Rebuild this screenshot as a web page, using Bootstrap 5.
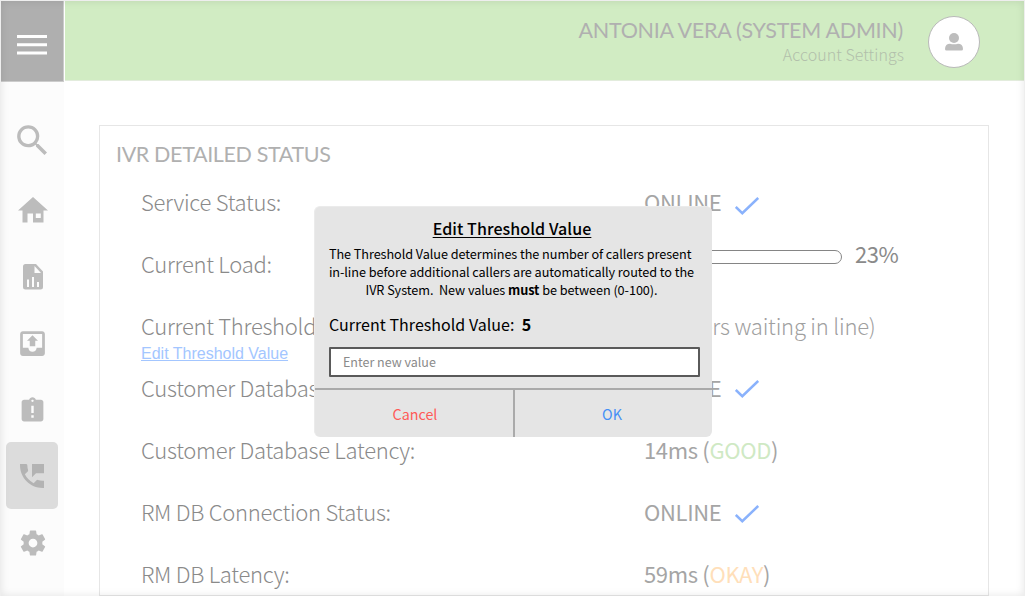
<!DOCTYPE html>
<html lang="en">
<head>
<meta charset="utf-8">
<title>IVR Detailed Status</title>
<meta name="viewport" content="width=device-width, initial-scale=1">
<link href="https://cdn.jsdelivr.net/npm/bootstrap@5.3.0/dist/css/bootstrap.min.css" rel="stylesheet">
<style>
  body { height: 596px; overflow: hidden; background: #fff; font-family: "Noto Sans CJK SC", "Open Sans", sans-serif; color: #8a8a8a; }
  .app { height: 596px; }
  .edge-shade { inset: 0; pointer-events: none; border: 1px solid #eee; border-bottom: 0; box-shadow: inset 0 0 9px rgba(0,0,0,.1); }
  .side { width: 64px; background: #fcfcfc; }
  .menu-btn { width: 64px; height: 82px; background: #afafaf; border-bottom: 1px solid #ccc; border-right: 1px solid #ccc; padding: 8px 0 0 0; }
  .side-item { width: 52px; height: 67px; border-radius: 5px; color: #bcbcbc; margin-left: 6.5px; }
  .side-item.current { background: #dcdcdc; color: #b3b3b3; margin-left: 6.400px; }
  .side-list { padding-top: 25px; }
  .topbar { height: 81px; background: #d1ecc3; border-bottom: 1px solid #e3ecdd; padding: 3px 45px 0 0; margin-left: 1px; }
  .who { font: 400 21.5px/26px Lato, sans-serif; letter-spacing: -.26px; color: #b0b0b0; margin-right: 1px; }
  .acct { font-weight: 300; font-size: 16px; line-height: 22px; letter-spacing: .05px; color: #b2bfab; margin-bottom: 2px; }
  .avatar { width: 52px; height: 52px; border: 1px solid #b9b9b9; margin-left: 24px; color: #bdbdbd; }
  .panel { width: 890px; height: 471px; margin: 44px 0 0 35px; border: 1px solid #e6e6e6; overflow: hidden; }
  .panel-title { font: 400 21.5px/28px Lato, sans-serif; letter-spacing: -.36px; color: #b0b0b0; margin: 14px 0 2px 16px; }
  .stat { height: 62px; padding-left: 41px; font-size: 22px; line-height: 30px; letter-spacing: -.28px; white-space: pre; }
  .stat-label { width: 503px; font-weight: 300; }
  .thin { font-weight: 300; color: #a0a0a0; letter-spacing: -.2px; }
  .val { color: #a5a5a5; letter-spacing: -.34px; }
  .tick { margin: 7px 0 0 14px; transform: translateY(1px); }
  .tick.mid { margin-top: 2px; }
  .load { width: 198px; height: 14px; border: 1px solid #858585; border-radius: 7px; background: #fff; margin-top: 8px; }
  .load .progress-bar { background: #8bb2fb; }
  .load-pct { margin-left: 13px; letter-spacing: -.4px; }
  .edit-link { font: 16px/18px "Liberation Sans", sans-serif; letter-spacing: 0; color: #a3c6ff; margin-top: 5px; }
  .good { color: #cfe9c4; } .okay { color: #ffdfba; }
  .dialog { left: 314px; top: 206px; width: 398px; height: 231px; background: #e5e5e5; border: 1px solid #ebebeb; border-width: 1px 0 0 1px; border-radius: 6px; color: #000; }
  .dialog h1 { font-size: 16px; line-height: 24px; font-weight: 500; letter-spacing: .08px; margin: 9px 3px 5px 0; text-underline-offset: 2px; }
  .dialog p { font-size: 12.700px; line-height: 18px; letter-spacing: -.07px; white-space: pre; margin: 0 4px 0 0; }
  .dialog .now { font-size: 16px; line-height: 24px; letter-spacing: .03px; margin: 13px 0 10px 14px; white-space: pre; }
  .dialog input { width: 371px; height: 30px; margin-left: 14px; padding: 0 12px 1px; border: 2px solid #5a5a5a; border-radius: 1px; font-size: 12.500px; background: #fff; margin-top: 1px; }
  .dialog input::placeholder { color: #8a8a8a; opacity: 1; }
  .actions { border-top: 2px solid #aaa; margin-top: 11px; }
  .actions button { font-size: 14.300px; background: none; border: 0; padding: 0; }
  .actions .cancel { width: 200px; border-right: 2px solid #aaa; padding-left: 2px; color: #ff5a57; }
  .actions .ok { padding-right: 3px; color: #4590f5; }
</style>
</head>
<body>
<div class="app d-flex position-relative">
  <nav class="side flex-shrink-0">
    <div class="menu-btn d-flex align-items-center justify-content-center">
      <svg width="30" height="22" fill="#fff"><path d="M0 1h30v3H0zM0 9.300h30v3H0zM0 17.600h30v3H0z"/></svg>
    </div>
    <div class="side-list d-flex flex-column">
      <a class="side-item d-flex align-items-center justify-content-center"><svg width="41" height="41" viewBox="0 0 24 24" fill="currentColor"><path d="M15.500 14h-.79l-.28-.27A6.471 6.471 0 0 0 16 9.500 6.500 6.500 0 1 0 9.500 16c1.610 0 3.090-.59 4.230-1.570l.27.28v.79l5 4.990L20.490 19l-4.990-5zm-6 0C7.010 14 5 11.990 5 9.500S7.010 5 9.500 5 14 7.010 14 9.500 11.990 14 9.500 14z"/></svg></a>
      <a class="side-item d-flex align-items-center justify-content-center pt-1"><svg width="30" height="26" viewBox="0 0 30 26" fill="currentColor" fill-rule="evenodd"><path d="M15 0l15 13.500h-4.500V25.500H15V16.500H9.500V25.500H4.500V13.500H0zM17.800 16.500v4.500h5v-4.500z"/></svg></a>
      <a class="side-item d-flex align-items-center justify-content-center pt-1"><svg width="20" height="26" viewBox="0 0 20 26" fill="currentColor" fill-rule="evenodd"><path d="M2.500 0H13l7 7.500V23a2.500 2.500 0 0 1-2.500 2.500h-15A2.500 2.500 0 0 1 0 23V2.500A2.500 2.500 0 0 1 2.500 0zM11.500 2v7H18zM4 15.500V23h2v-7.500zM9 13v10h2V13zM14 18v5h2v-5z"/></svg></a>
      <a class="side-item d-flex align-items-center justify-content-center pt-1"><svg width="33" height="33" viewBox="0 0 24 24" fill="currentColor"><path d="M16 10l-4-4-4 4h2v4h4v-4h2zm3-7H5c-1.110 0-2 .9-2 2v14c0 1.100.89 2 2 2h14c1.100 0 2-.9 2-2V5c0-1.100-.9-2-2-2zm0 12h-4c0 1.660-1.340 3-3 3s-3-1.340-3-3H5V5h14v10z"/></svg></a>
      <a class="side-item d-flex align-items-center justify-content-center pt-1"><svg width="29" height="29" viewBox="0 0 24 24" fill="currentColor"><path d="M19 3h-4.180C14.400 1.840 13.300 1 12 1s-2.400.84-2.820 2H5c-1.100 0-2 .9-2 2v14c0 1.100.9 2 2 2h14c1.100 0 2-.9 2-2V5c0-1.100-.9-2-2-2zm-6 15h-2v-2h2v2zm0-4h-2V8h2v6zm-1-9c-.55 0-1-.45-1-1s.45-1 1-1 1 .45 1 1-.45 1-1 1z"/></svg></a>
      <a class="side-item current d-flex align-items-center justify-content-center"><svg width="32" height="32" viewBox="0 0 24 24" fill="currentColor"><path d="M20 15.500c-1.250 0-2.450-.2-3.570-.57a1.020 1.020 0 0 0-1.020.24l-2.200 2.200a15.045 15.045 0 0 1-6.590-6.590l2.200-2.210a.96.96 0 0 0 .25-1A11.360 11.360 0 0 1 8.500 4c0-.55-.45-1-1-1H3v1c0 9.390 7.610 17 17 17h1v-5.500zM12 3v10l3-3h6V3z"/></svg></a>
      <a class="side-item d-flex align-items-center justify-content-center"><svg width="30" height="30" viewBox="0 0 24 24" fill="currentColor"><path d="M19.430 12.980c.04-.32.07-.64.07-.98s-.03-.66-.07-.98l2.110-1.650c.19-.15.24-.42.12-.64l-2-3.460c-.12-.22-.39-.3-.61-.22l-2.490 1c-.52-.4-1.080-.73-1.690-.98l-.38-2.650A.488.488 0 0 0 14 2h-4c-.25 0-.46.18-.49.42l-.38 2.650c-.61.25-1.170.59-1.690.98l-2.490-1c-.23-.09-.49 0-.61.22l-2 3.460c-.13.22-.07.49.12.64l2.110 1.650c-.04.32-.07.65-.07.98s.03.66.07.98l-2.110 1.650c-.19.15-.24.42-.12.64l2 3.460c.12.22.39.3.61.22l2.490-1c.52.4 1.080.73 1.690.98l.38 2.650c.03.24.24.42.49.42h4c.25 0 .46-.18.49-.42l.38-2.650c.61-.25 1.170-.59 1.690-.98l2.490 1c.23.09.49 0 .61-.22l2-3.460c.12-.22.07-.49-.12-.64zM12 15.500c-1.930 0-3.500-1.570-3.500-3.500s1.570-3.500 3.500-3.500 3.500 1.570 3.500 3.500-1.570 3.500-3.500 3.500z"/></svg></a>
    </div>
  </nav>
  <div class="flex-grow-1">
    <header class="topbar d-flex align-items-center justify-content-end">
      <div class="text-end">
        <div class="who">ANTONIA VERA (SYSTEM ADMIN)</div>
        <div class="acct">Account Settings</div>
      </div>
      <div class="avatar rounded-circle bg-white d-flex align-items-center justify-content-center">
        <svg width="18" height="18" fill="currentColor"><circle cx="9" cy="5" r="5"/><path d="M0 16c0-3.500 2-5.300 5-5.300q4 1 8 0c3 0 5 1.800 5 5.300q0 1.500-1.500 1.500h-15Q0 17.500 0 16z"/></svg>
      </div>
    </header>
    <main class="panel">
      <h2 class="panel-title">IVR DETAILED STATUS</h2>
      <div class="stat d-flex align-items-center"><span class="stat-label">Service Status:</span><span class="val">ONLINE</span><svg class="tick" width="24" height="18" fill="none" stroke="#8ab2fc" stroke-width="2.500"><path d="M.8 10l6.500 6.200L23.200 1"/></svg></div>
      <div class="stat d-flex align-items-center"><span class="stat-label">Current Load:</span><span class="d-flex align-items-center mb-3 pb-1"><span class="progress load"><span class="progress-bar" style="width:23%"></span></span><span class="load-pct">23%</span></span></div>
      <div class="stat d-flex align-items-center"><div class="stat-label position-relative">Current Threshold:<a class="edit-link position-absolute start-0 top-100" href="#">Edit Threshold Value</a></div><span class="thin">5 (callers waiting in line)</span></div>
      <div class="stat d-flex align-items-center"><span class="stat-label">Customer Database Status:</span><span class="val">ONLINE</span><svg class="tick mid" width="24" height="18" fill="none" stroke="#8ab2fc" stroke-width="2.500"><path d="M.8 10l6.500 6.200L23.200 1"/></svg></div>
      <div class="stat d-flex align-items-center"><span class="stat-label">Customer Database Latency:</span><span class="val">14ms (<span class="good">GOOD</span>)</span></div>
      <div class="stat d-flex align-items-center"><span class="stat-label">RM DB Connection Status:</span><span class="val">ONLINE</span><svg class="tick mt-1" width="24" height="18" fill="none" stroke="#8ab2fc" stroke-width="2.500"><path d="M.8 10l6.500 6.200L23.200 1"/></svg></div>
      <div class="stat d-flex align-items-center"><span class="stat-label">RM DB Latency:</span><span class="val">59ms (<span class="okay">OKAY</span>)</span></div>
    </main>
  </div>
  <div class="edge-shade position-absolute"></div>
  <section class="dialog position-absolute d-flex flex-column" role="dialog">
    <h1 class="text-center text-decoration-underline">Edit Threshold Value</h1>
    <p class="text-center"><span class="d-block">The Threshold Value determines the number of callers present </span><span class="d-block">in-line before additional callers are automatically routed to the</span><span class="d-block">IVR System.  New values <b>must</b> be between (0-100).</span></p>
    <div class="now">Current Threshold Value:  <b>5</b></div>
    <input type="text" placeholder="Enter new value">
    <div class="actions d-flex flex-grow-1">
      <button class="cancel">Cancel</button>
      <button class="ok flex-grow-1">OK</button>
    </div>
  </section>
</div>
<script src="https://cdn.jsdelivr.net/npm/bootstrap@5.3.0/dist/js/bootstrap.bundle.min.js"></script>
</body>
</html>
